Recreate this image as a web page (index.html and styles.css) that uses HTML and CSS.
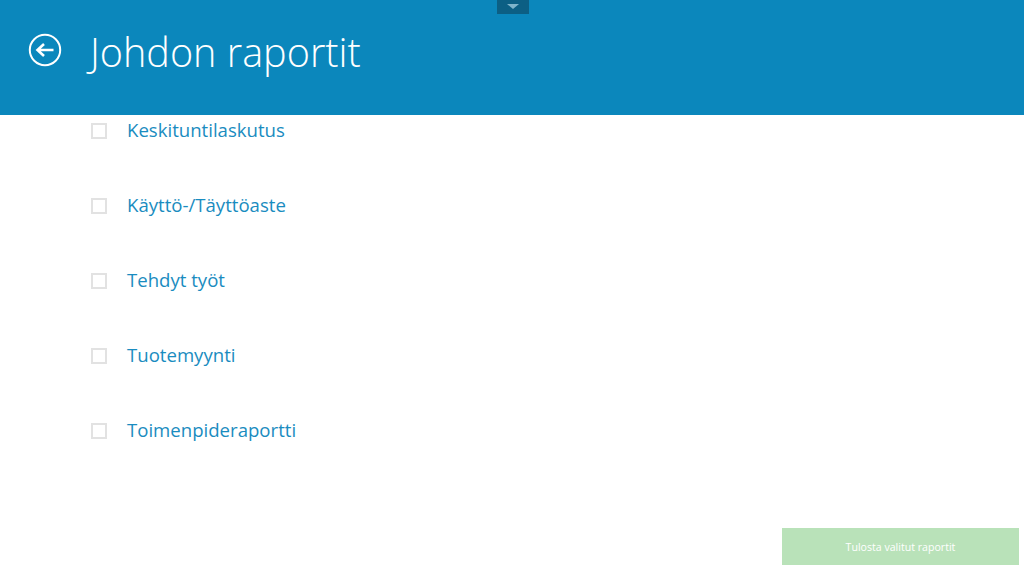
FILE: index.html
```html
<!DOCTYPE html>
<html lang="fi">
<head>
<meta charset="utf-8">
<title>Johdon raportit</title>
<link rel="stylesheet" href="styles.css">
</head>
<body>
<div class="page">
  <header class="header">
    <div class="handle"><span class="handle-arrow"></span></div>
    <svg class="back" viewBox="0 0 34 34" width="34" height="34" aria-hidden="true">
      <circle cx="17" cy="17" r="15.2" fill="none" stroke="#fff" stroke-width="2"/>
      <path d="M25.5 17H10M16 11l-6.500 6 6.500 6" fill="none" stroke="#fff" stroke-width="2.600"/>
    </svg>
    <h1 class="title">Johdon raportit</h1>
  </header>
  <main class="list">
    <label class="row"><span class="box"></span><span class="label">Keskituntilaskutus</span></label>
    <label class="row"><span class="box"></span><span class="label">Käyttö-/Täyttöaste</span></label>
    <label class="row"><span class="box"></span><span class="label">Tehdyt työt</span></label>
    <label class="row"><span class="box"></span><span class="label">Tuotemyynti</span></label>
    <label class="row"><span class="box"></span><span class="label">Toimenpideraportti</span></label>
  </main>
  <footer class="footer">
    <button class="print" type="button">Tulosta valitut raportit</button>
  </footer>
</div>
</body>
</html>
```
FILE: styles.css
```css
* { box-sizing: border-box; }
html, body { margin: 0; height: 100%; background: #fff; overflow: hidden; }
body { font-family: "Open Sans", "Noto Sans", sans-serif; }
.page { height: 576px; display: flex; flex-direction: column; }
.header {
  position: relative;
  height: 115px;
  flex: none;
  background: #0b87bc;
  display: flex;
  align-items: flex-start;
  padding: 33px 0 0 28px;
}
.handle {
  position: absolute;
  top: 0;
  left: 497px;
  width: 32px;
  height: 14px;
  background: #0c5f84;
  display: flex;
  justify-content: center;
  padding-top: 4px;
}
.handle-arrow {
  width: 0;
  height: 0;
  border-left: 6px solid transparent;
  border-right: 6px solid transparent;
  border-top: 5px solid #7fb4cb;
}
.back { flex: none; }
.title {
  margin: -9px 0 0 28px;
  font-size: 39.6px;
  line-height: 56px;
  font-weight: 300;
  color: #fff;
}
.list { flex: none; padding: 0 0 0 91px; display: flex; flex-direction: column; gap: 45px; }
.row { height: 30px; display: flex; align-items: center; color: #1a8cc0; }
.box { width: 16px; height: 16px; flex: none; border: 2px solid #e2e2e2; background: #fff; margin-top: 1px; }
.label { margin-left: 20px; font-size: 18.6px; line-height: 30px; }
.footer { flex: 1; display: flex; justify-content: flex-end; align-items: flex-start; padding: 83px 5px 0 0; }
.print {
  width: 237px;
  height: 37px;
  border: 0;
  padding: 0;
  background: #b9e2b9;
  color: #fff;
  font: 400 10.6px "Open Sans", "Noto Sans", sans-serif;
}
```
